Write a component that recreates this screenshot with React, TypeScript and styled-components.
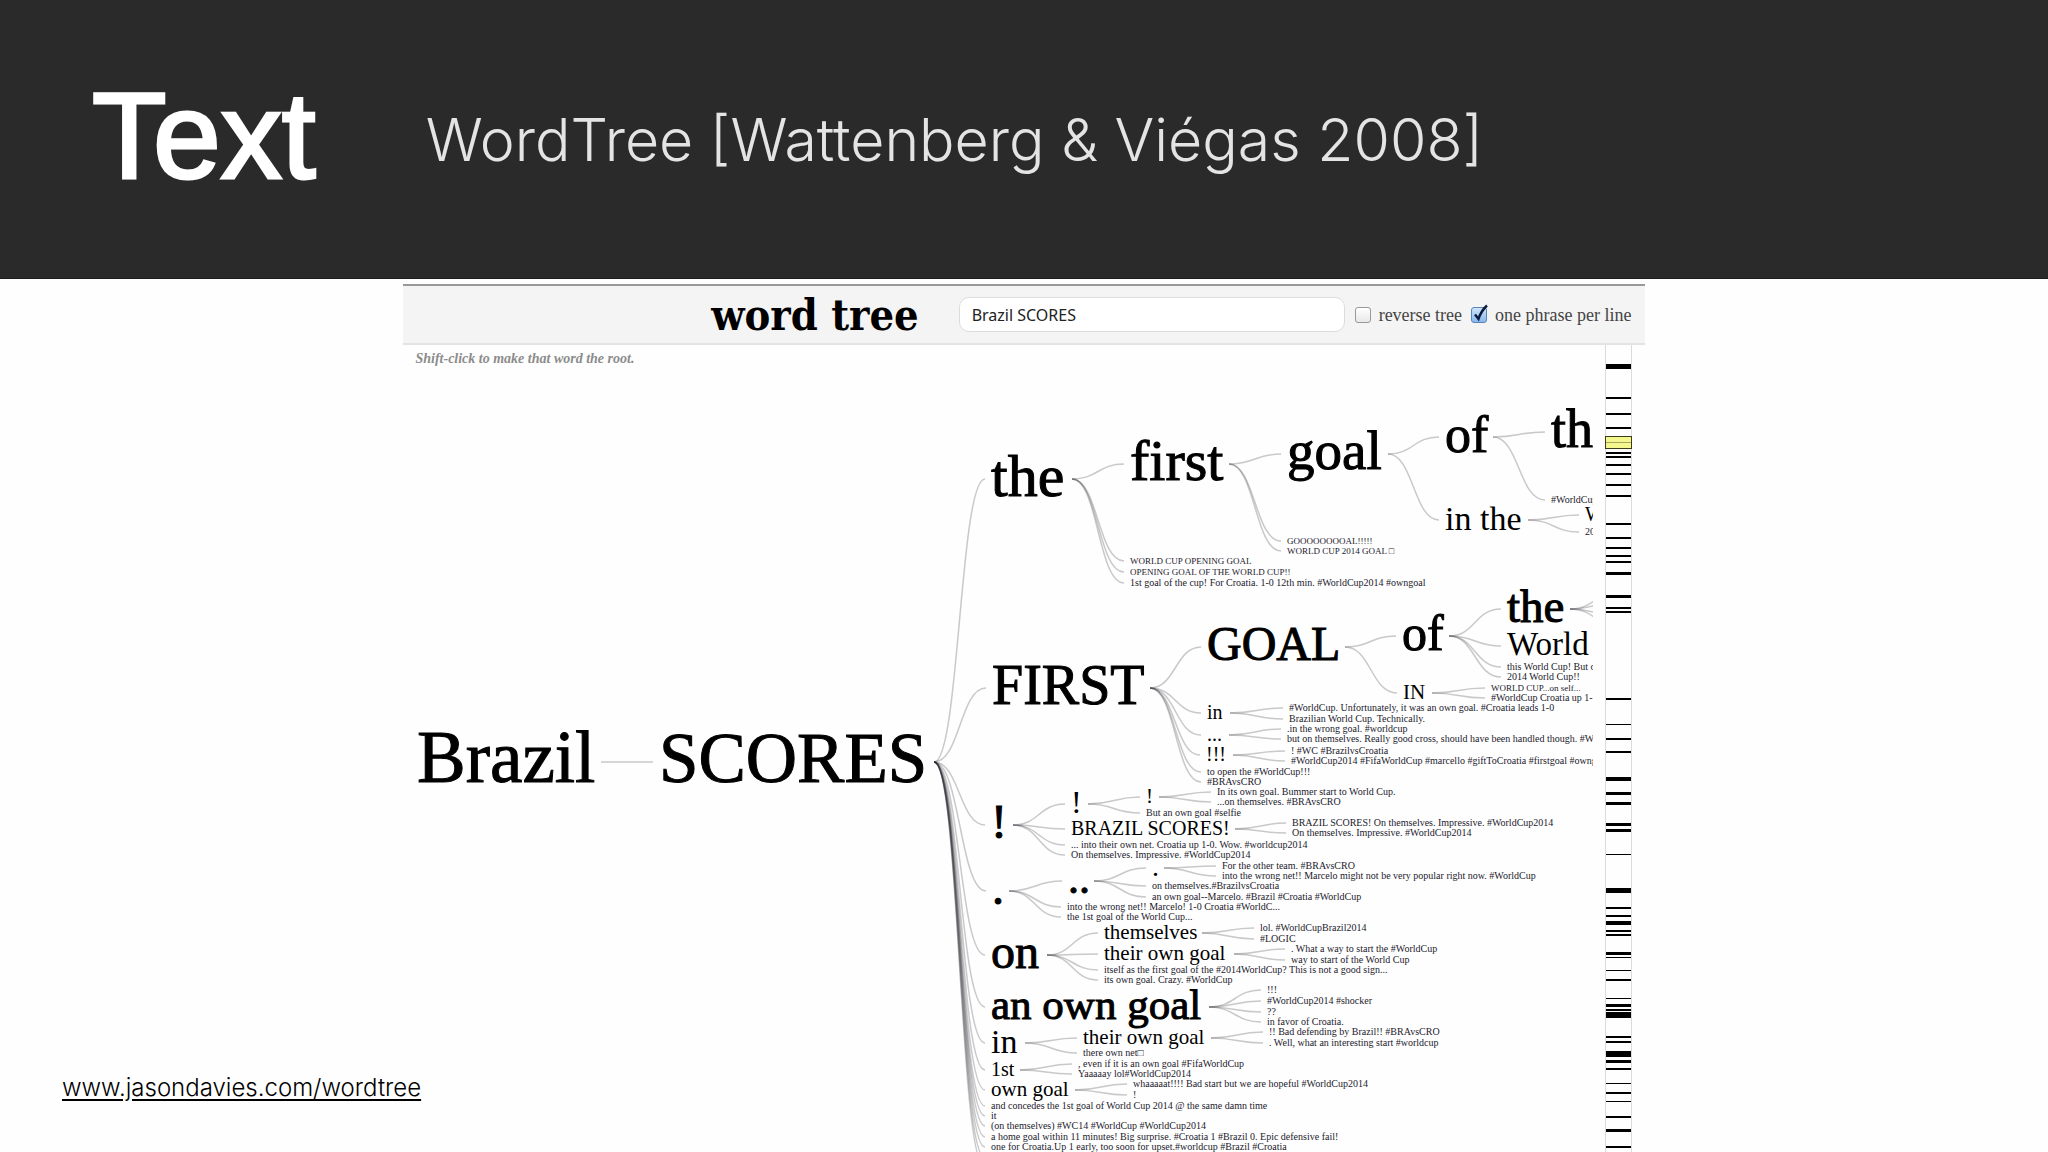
import React, { useState } from "react";
import styled, { createGlobalStyle } from "styled-components";

const serif = `"Liberation Serif", Georgia, serif`;
const sans = `"Liberation Sans", Arial, sans-serif`;
const lightSans = `Inter, "Helvetica Neue", sans-serif`;

const GlobalStyle = createGlobalStyle`
  *, *::before, *::after { box-sizing: border-box; }
  body { margin: 0; background: #fefefe; color: #000; font-family: ${sans}; }
`;

const Slide = styled.div`
  display: flex;
  flex-direction: column;
  height: 100vh;
  overflow: hidden;
`;

const SlideHeader = styled.header`
  display: flex;
  align-items: center;
  gap: 110px;
  flex: none;
  height: 279px;
  padding: 0 92px 6px;
  background: #2a2a2a;
  border-bottom: 1px solid #1c1c1c;
  white-space: nowrap;
`;

const SlideTitle = styled.h1`
  margin: 0;
  color: #fff;
  font: 400 122px/136px ${sans};
  -webkit-text-stroke: 3px #fff;
`;

const SlideSubtitle = styled.p`
  margin: 0;
  padding-top: 8px;
  color: #e4e4e4;
  font: 300 59px/76px ${lightSans};
`;

const SlideBody = styled.main`
  display: grid;
  grid-template-columns: minmax(0, 1fr) 60.6% minmax(0, 1fr);
  flex: 1;
  min-height: 0;
  padding-top: 5px;
`;

const Source = styled.footer`
  align-self: end;
  z-index: 1;
  padding: 0 0 48px 62px;
  white-space: nowrap;
`;

const SourceLink = styled.a`
  color: #000;
  font: 300 24px/32px ${lightSans};
  text-underline-offset: 3px;
`;

const WordTreePanel = styled.section`
  display: flex;
  flex-direction: column;
  min-width: 0;
  min-height: 0;
  border-top: 2px solid #999;
`;

const Toolbar = styled.form`
  display: flex;
  align-items: center;
  justify-content: flex-end;
  flex: none;
  height: 59px;
  padding: 0 13px;
  background: #f4f4f4;
  border-bottom: 2px solid #e3e3e5;
  white-space: nowrap;
`;

const AppName = styled.h2`
  margin: 0 40px 0 0;
  font: 700 43px/48px "DejaVu Serif Condensed", "DejaVu Serif", serif;
`;

const SearchInput = styled.input`
  width: 386px;
  height: 35px;
  margin-right: 10px;
  padding: 0 12px;
  color: #222;
  background: #fff;
  border: 1px solid #dcdcdc;
  border-radius: 10px;
  font: 400 16px/24px "Noto Sans", sans-serif;
  outline: none;
`;

const Option = styled.label`
  display: flex;
  align-items: center;
  gap: 8px;
  margin-left: 9px;
  color: #444;
  font: 400 18px/24px ${serif};
  &:first-of-type { margin-left: 0; }
`;

const CheckSlot = styled.span`
  display: grid;
  width: 16px;
  height: 16px;
  & > * { grid-area: 1 / 1; }
`;

const CheckInput = styled.input`
  appearance: none;
  width: 16px;
  height: 16px;
  margin: 0;
  border: 1px solid #999;
  border-radius: 3px;
  background: linear-gradient(#fff, #e8e8e8);
  &:checked {
    border-color: #5c84b4;
    background: linear-gradient(#cfe4fa, #86b9ee);
  }
`;

const CheckMark = styled.svg`
  overflow: visible;
  pointer-events: none;
`;

const TreeArea = styled.div`
  display: flex;
  flex: 1;
  gap: 12px;
  min-height: 0;
  padding-right: 13px;
`;

const TreeColumn = styled.div`
  display: flex;
  flex-direction: column;
  flex: 1;
  min-width: 0;
`;

const Hint = styled.p`
  flex: none;
  margin: 0 0 -5px;
  padding: 5px 12px 0;
  color: #8c8c8c;
  font: italic 700 14px/18px ${serif};
`;

const TreeCanvas = styled.svg`
  display: block;
  flex: 1;
  width: 100%;
  min-height: 0;
  overflow: hidden;
  font-family: ${serif};
`;

const Link = styled.path`
  fill: none;
  stroke: #2c2930;
  stroke-opacity: 0.25;
  stroke-width: 1.5px;
`;

const Word = styled.text<{ $size: number }>`
  font-size: ${(p) => p.$size}px;
  fill: ${(p) => (p.$size < 12 ? "#1c1a2c" : "#000")};
  stroke: ${(p) => (p.$size > 40 ? "#000" : "none")};
  stroke-width: 1px;
  cursor: pointer;
`;

const MiniMap = styled.svg`
  display: block;
  flex: none;
  width: 27px;
  height: 100%;
  border: 1px solid #dcdae0;
  border-top: 0;
  border-bottom: 0;
  overflow: visible;
  shape-rendering: crispEdges;
`;

type TreeNode = {
  text: string;
  x: number;
  y: number;
  size: number;
  out: number;
  children: TreeNode[];
};

/** A word that branches: its baseline origin, type size and where its links leave. */
const branch = (text: string, x: number, y: number, size: number, out: number, children: TreeNode[]): TreeNode => ({
  text, x, y, size, out, children,
});
/** The rest of a phrase, printed small at the end of a branch. */
const leaf = (text: string, x: number, y: number, size = 10): TreeNode => ({ text, x, y, size, out: 0, children: [] });

const tree = branch("Brazil", 13, 418, 73, 197, [
  branch("SCORES", 255, 418, 71, 530, [
    branch("the", 587, 132, 60, 668, [
      branch("first", 726, 116, 58, 825, [
        branch("goal", 883, 105, 55, 984, [
          branch("of", 1041, 88, 52, 1089, [
            leaf("th", 1147, 83, 54),
            leaf("#WorldCup", 1147, 139),
          ]),
          branch("in the", 1041, 166, 34, 1124, [
            leaf("World", 1181, 157, 20),
            leaf("2014", 1181, 171),
          ]),
        ]),
        leaf("GOOOOOOOOAL!!!!!", 883, 180, 9),
        leaf("WORLD CUP 2014 GOAL □", 883, 190, 9),
      ]),
      leaf("WORLD CUP OPENING GOAL", 726, 200, 9),
      leaf("OPENING GOAL OF THE WORLD CUP!!", 726, 211, 9),
      leaf("1st goal of the cup! For Croatia. 1-0 12th min. #WorldCup2014 #owngoal", 726, 222),
    ]),
    branch("FIRST", 588, 340, 56, 746, [
      branch("GOAL", 803, 296, 48, 941, [
        branch("of", 998, 286, 50, 1045, [
          branch("the", 1103, 258, 47, 1166, [
            leaf("", 1225, 228), leaf("", 1225, 240), leaf("", 1225, 256), leaf("", 1225, 268),
          ]),
          leaf("World", 1103, 291, 33),
          leaf("this World Cup! But o", 1103, 306),
          leaf("2014 World Cup!!", 1103, 316),
        ]),
        branch("IN", 999, 335, 21, 1028, [
          leaf("WORLD CUP...on self...", 1087, 327, 9),
          leaf("#WorldCup Croatia up 1-", 1087, 337),
        ]),
      ]),
      branch("in", 803, 355, 20, 826, [
        leaf("#WorldCup. Unfortunately, it was an own goal. #Croatia leads 1-0", 885, 347),
        leaf("Brazilian World Cup. Technically.", 885, 358),
      ]),
      branch("...", 803, 377, 20, 825, [
        leaf(".in the wrong goal. #worldcup", 883, 368),
        leaf("but on themselves. Really good cross, should have been handled though. #WorldCup", 883, 378),
      ]),
      branch("!!!", 802, 397, 20, 829, [
        leaf("! #WC #BrazilvsCroatia", 887, 390),
        leaf("#WorldCup2014 #FifaWorldCup #marcello #giftToCroatia #firstgoal #owngoal", 887, 400),
      ]),
      leaf("to open the #WorldCup!!!", 803, 411),
      leaf("#BRAvsCRO", 803, 421),
    ]),
    branch("!", 587, 474, 48, 609, [
      branch("!", 667, 449, 32, 684, [
        branch("!", 742, 439, 21, 755, [
          leaf("In its own goal. Bummer start to World Cup.", 813, 431),
          leaf("...on themselves. #BRAvsCRO", 813, 441),
        ]),
        leaf("But an own goal #selfie", 742, 452),
      ]),
      branch("BRAZIL SCORES!", 667, 471, 20, 831, [
        leaf("BRAZIL SCORES! On themselves. Impressive. #WorldCup2014", 888, 462),
        leaf("On themselves. Impressive. #WorldCup2014", 888, 472),
      ]),
      leaf("... into their own net. Croatia up 1-0. Wow. #worldcup2014", 667, 484),
      leaf("On themselves. Impressive. #WorldCup2014", 667, 494),
    ]),
    branch(".", 588, 540, 48, 605, [
      branch("..", 664, 529, 44, 690, [
        branch(".", 748, 512, 28, 760, [
          leaf("For the other team. #BRAvsCRO", 818, 505),
          leaf("into the wrong net!! Marcelo might not be very popular right now. #WorldCup", 818, 515),
        ]),
        leaf("on themselves.#BrazilvsCroatia", 748, 525),
        leaf("an own goal--Marcelo. #Brazil #Croatia #WorldCup", 748, 536),
      ]),
      leaf("into the wrong net!! Marcelo! 1-0 Croatia #WorldC...", 663, 546),
      leaf("the 1st goal of the World Cup...", 663, 556),
    ]),
    branch("on", 587, 604, 48, 643, [
      branch("themselves", 700, 575, 21, 798, [
        leaf("lol. #WorldCupBrazil2014", 856, 567),
        leaf("#LOGIC", 856, 578),
      ]),
      branch("their own goal", 700, 596, 21, 830, [
        leaf(". What a way to start the #WorldCup", 887, 588),
        leaf("way to start of the World Cup", 887, 599),
      ]),
      leaf("itself as the first goal of the #2014WorldCup? This is not a good sign...", 700, 609),
      leaf("its own goal. Crazy. #WorldCup", 700, 619),
    ]),
    branch("an own goal", 587, 655, 43, 805, [
      leaf("!!!", 863, 629),
      leaf("#WorldCup2014 #shocker", 863, 640),
      leaf("??", 863, 651),
      leaf("in favor of Croatia.", 863, 661),
    ]),
    branch("in", 587, 689, 34, 621, [
      branch("their own goal", 679, 680, 21, 807, [
        leaf("!! Bad defending by Brazil!! #BRAvsCRO", 865, 671),
        leaf(". Well, what an interesting start #worldcup", 865, 682),
      ]),
      leaf("there own net□", 679, 692),
    ]),
    branch("1st", 587, 712, 20, 616, [
      leaf(", even if it is an own goal #FifaWorldCup", 674, 703),
      leaf("Yaaaaay lol#WorldCup2014", 674, 713),
    ]),
    branch("own goal", 587, 732, 21, 671, [
      leaf("whaaaaat!!!! Bad start but we are hopeful #WorldCup2014", 729, 723),
      leaf("!", 729, 734),
    ]),
    leaf("and concedes the 1st goal of World Cup 2014 @ the same damn time", 587, 745),
    leaf("it", 587, 755),
    leaf("(on themselves) #WC14 #WorldCup #WorldCup2014", 587, 765),
    leaf("a home goal within 11 minutes! Big surprise. #Croatia 1 #Brazil 0. Epic defensive fail!", 587, 776),
    leaf("one for Croatia.Up 1 early, too soon for upset.#worldcup #Brazil #Croatia", 587, 786),
    leaf("", 587, 797),
    leaf("", 587, 807),
  ]),
]);

const midline = (n: TreeNode) => n.y - Math.round(n.size * 0.28);

const linkPath = (from: TreeNode, to: TreeNode) => {
  const x1 = to.x - 6;
  const mid = (from.out + x1) / 2;
  const y0 = midline(from);
  const y1 = midline(to);
  return `M${from.out},${y0}C${mid},${y0} ${mid},${y1} ${x1},${y1}`;
};

function Branch({ node }: { node: TreeNode }) {
  return (
    <g>
      {node.children.map((child, i) => (
        <g key={i}>
          <Link d={linkPath(node, child)} />
          <Branch node={child} />
        </g>
      ))}
      {node.text && (
        <Word $size={node.size} x={node.x} y={node.y}>
          {node.text}
        </Word>
      )}
    </g>
  );
}

/** [offset, thickness] of every phrase that holds the searched words. */
const hits: [number, number][] = [
  [19, 5], [52, 2], [68, 2], [82, 2], [107, 2], [111, 2], [119, 2], [128, 2], [139, 2], [150, 2],
  [178, 2], [192, 2], [202, 2], [210, 2], [216, 2], [227, 3], [250, 3], [262, 2], [266, 2],
  [353, 2], [379, 1], [393, 2], [406, 2], [432, 4], [447, 3], [457, 3], [478, 3], [484, 3],
  [509, 1], [543, 5], [562, 2], [570, 2], [576, 4], [585, 2], [589, 2], [607, 3], [612, 1],
  [625, 1], [634, 2], [653, 1], [659, 3], [664, 2], [667, 6], [691, 2], [696, 2], [706, 6],
  [715, 3], [723, 2], [738, 1], [747, 2], [756, 1], [771, 2], [784, 3], [801, 2],
];

export default function App() {
  const [query, setQuery] = useState("Brazil SCORES");
  const [reverse, setReverse] = useState(false);
  const [perLine, setPerLine] = useState(true);

  const options = [
    { id: "reverse", label: "reverse tree", on: reverse, set: setReverse },
    { id: "per-line", label: "one phrase per line", on: perLine, set: setPerLine },
  ];

  return (
    <>
      <GlobalStyle />
      <Slide>
        <SlideHeader>
          <SlideTitle>Text</SlideTitle>
          <SlideSubtitle>WordTree [Wattenberg &amp; Viégas 2008]</SlideSubtitle>
        </SlideHeader>
        <SlideBody>
          <Source>
            <SourceLink href="#wordtree">www.jasondavies.com/wordtree</SourceLink>
          </Source>
          <WordTreePanel>
            <Toolbar onSubmit={(e) => e.preventDefault()}>
              <AppName>word tree</AppName>
              <SearchInput
                type="text"
                aria-label="Search phrase"
                value={query}
                onChange={(e) => setQuery(e.target.value)}
              />
              {options.map((o) => (
                <Option key={o.id} htmlFor={o.id}>
                  <CheckSlot>
                    <CheckInput id={o.id} type="checkbox" checked={o.on} onChange={(e) => o.set(e.target.checked)} />
                    {o.on && (
                      <CheckMark width="16" height="16" viewBox="0 0 16 16" aria-hidden="true">
                        <path d="M4 7.5 L7.5 12 Q10 4 16 -1.5" fill="none" stroke="#0c1a3c" strokeWidth="2.4" />
                      </CheckMark>
                    )}
                  </CheckSlot>
                  {o.label}
                </Option>
              ))}
            </Toolbar>
            <TreeArea>
              <TreeColumn>
                <Hint>Shift-click to make that word the root.</Hint>
                <TreeCanvas>
                  <g transform="translate(1 1)">
                    <Branch node={tree} />
                  </g>
                </TreeCanvas>
              </TreeColumn>
              <MiniMap>
                {hits.map(([y, h]) => (
                  <rect key={y} x="0" y={y} width="25" height={h} />
                ))}
                <rect x="-1" y="91" width="26" height="12" fill="#f4f78e" stroke="#3c3c18" />
                <rect x="0" y="97" width="25" height="1" fill="#a5a75c" />
              </MiniMap>
            </TreeArea>
          </WordTreePanel>
        </SlideBody>
      </Slide>
    </>
  );
}
